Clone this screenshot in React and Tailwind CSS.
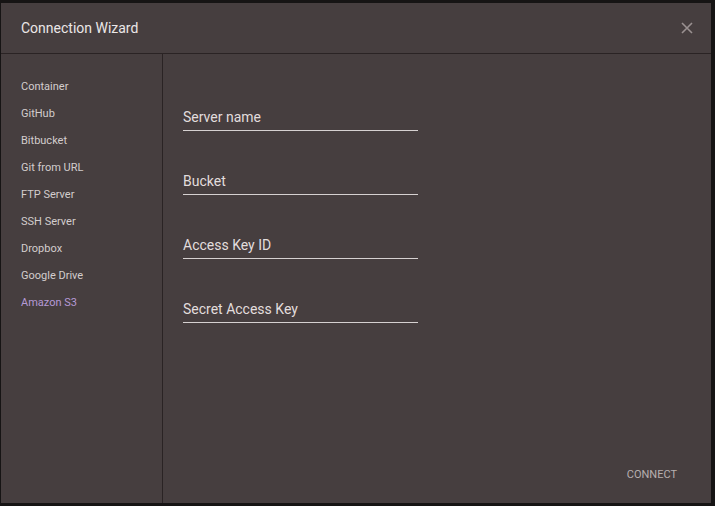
import React from 'react';

const SOURCES = [
  'Container',
  'GitHub',
  'Bitbucket',
  'Git from URL',
  'FTP Server',
  'SSH Server',
  'Dropbox',
  'Google Drive',
  'Amazon S3',
];

const FIELDS = ['Server name', 'Bucket', 'Access Key ID', 'Secret Access Key'];

export default function App() {
  const active = 'Amazon S3';

  return (
    <div
      className="w-[715px] h-[506px] bg-[#161414] pt-[3px] pl-[1px] overflow-hidden"
      style={{ fontFamily: 'Roboto, "Noto Sans", sans-serif' }}
    >
      <div className="w-[710px] h-[500px] bg-[#463e3f] flex flex-col">
        {/* Header */}
        <div className="h-[51px] shrink-0 flex items-center justify-between pl-5 pr-[16px] border-b border-[#2a2324]">
          <h1 className="text-[14px] leading-5 text-[#ebe7e7] pb-[1px]">Connection Wizard</h1>
          <button className="w-4 h-4 flex items-center justify-center text-[#9a9191]">
            <svg width="12" height="12" viewBox="0 0 12 12" fill="none" stroke="currentColor" strokeWidth="1.6">
              <path d="M1 1 L11 11 M11 1 L1 11" />
            </svg>
          </button>
        </div>

        {/* Body */}
        <div className="flex flex-1 min-h-0">
          <nav className="w-[162px] shrink-0 border-r border-[#2a2324] pt-5 pl-5">
            {SOURCES.map((s) => (
              <div
                key={s}
                className={`h-[27px] flex items-center text-[11px] ${
                  s === active ? 'text-[#b59ad6]' : 'text-[#d3cdcd]'
                }`}
              >
                {s}
              </div>
            ))}
          </nav>

          <div className="flex-1 flex flex-col pl-5 pr-[34px] pt-[53px] pb-[21px]">
            <div className="flex flex-col gap-[40px]">
              {FIELDS.map((f) => (
                <label key={f} className="w-[235px] block border-b border-[#d6d1d1] pb-[3px]">
                  <span className="block text-[14px] leading-5 text-[#e2dddd]">{f}</span>
                </label>
              ))}
            </div>
            <div className="mt-auto flex justify-end">
              <button className="text-[11px] leading-[14px] uppercase text-[#b7afaf]">Connect</button>
            </div>
          </div>
        </div>
      </div>
    </div>
  );
}
